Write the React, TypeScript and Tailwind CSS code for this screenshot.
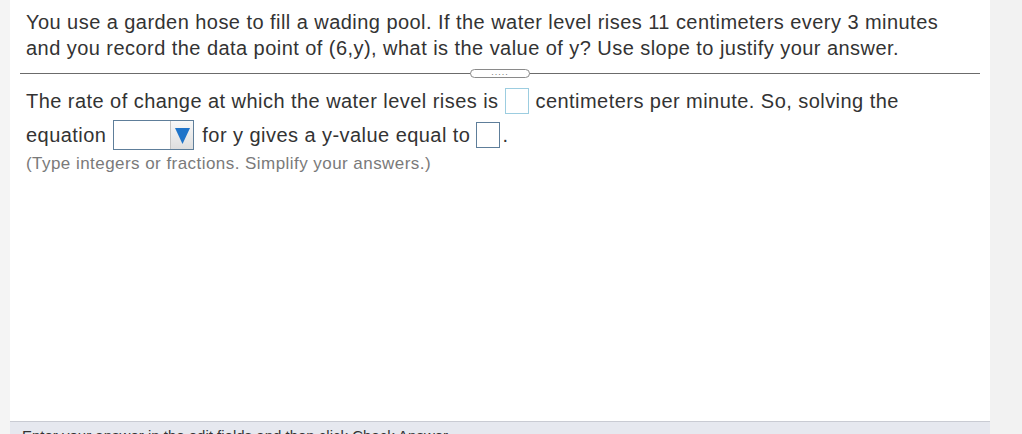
import React from "react";

function Box({ className = "" }: { className?: string }) {
  return <span className={"inline-block align-middle w-[24px] h-[26px] bg-white " + className} />;
}

export default function App() {
  return (
    <div className="w-[1022px] h-[434px] flex bg-[#f2f2f2] overflow-hidden text-[#333]" style={{ fontFamily: '"Liberation Sans", Arial, sans-serif' }}>
      <div className="w-[10px] bg-[#f4f4f4]" />
      <div className="w-[980px] flex flex-col bg-white">
        <div className="flex-1 flex flex-col">
          <div className="pl-[16px] pr-[40px] pt-[9px] text-[20px] leading-[26px] tracking-[0.45px]">
            You use a garden hose to fill a wading pool. If the water level rises 11 centimeters every 3 minutes and you record the data point of (6,y), what is the value of y? Use slope to justify your answer.
          </div>
          <div className="relative mx-[10px] mt-[8px] h-[8px] flex items-center">
            <div className="w-full h-px bg-[#6b6b6b]" />
            <div className="absolute left-[450px] top-0 w-[60px] h-[9px] rounded-full border border-[#8a8a8a] bg-white flex items-center justify-center">
              <span className="text-[9px] leading-[6px] tracking-[1px] text-[#777] -mt-[3px]">.....</span>
            </div>
          </div>
          <div className="pl-[16px] pt-[10px] text-[20px] tracking-[0.45px]">
            <div className="h-[28px] flex items-center">
              <span>The rate of change at which the water level rises is</span>
              <Box className="ml-[6px] mr-[7px] border border-[#9ccde0]" />
              <span>centimeters per minute. So, solving the</span>
            </div>
            <div className="h-[30px] mt-[5px] flex items-center">
              <span>equation</span>
              <span className="ml-[7px] mr-[8px] inline-flex w-[81px] h-[30px] border border-[#5e7e9a] bg-white">
                <span className="flex-1" />
                <span className="w-[23px] h-full border-l border-[#c4c4c4] bg-gradient-to-b from-[#f8f8f8] to-[#dedede] flex items-center justify-center">
                  <svg width="15" height="17" viewBox="0 0 15 17">
                    <polygon points="0,1 15,1 7.5,17" fill="#1f74c9" />
                  </svg>
                </span>
              </span>
              <span>for y gives a y-value equal to</span>
              <Box className="ml-[6px] border border-[#5e7e9a]" />
              <span className="ml-[2px]">.</span>
            </div>
            <div className="mt-[2px] text-[17px] leading-[24px] tracking-[0.45px] text-[#7a7a7a]">(Type integers or fractions. Simplify your answers.)</div>
          </div>
        </div>
        <div className="h-[13px] border-t border-[#c9cbd3] bg-[#e6e8ef] overflow-hidden">
          <div className="pl-[12px] pt-[5px] text-[15px] leading-[18px] text-[#333]">Enter your answer in the edit fields and then click Check Answer.</div>
        </div>
      </div>
    </div>
  );
}
